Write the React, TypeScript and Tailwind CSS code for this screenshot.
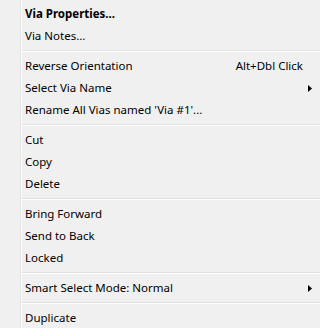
type Item =
  | { kind: "sep" }
  | { kind: "item"; label: string; bold?: boolean; shortcut?: string; submenu?: boolean };

const items: Item[] = [
  { kind: "item", label: "Via Properties...", bold: true },
  { kind: "item", label: "Via Notes..." },
  { kind: "sep" },
  { kind: "item", label: "Reverse Orientation", shortcut: "Alt+Dbl Click" },
  { kind: "item", label: "Select Via Name", submenu: true },
  { kind: "item", label: "Rename All Vias named 'Via #1'..." },
  { kind: "sep" },
  { kind: "item", label: "Cut" },
  { kind: "item", label: "Copy" },
  { kind: "item", label: "Delete" },
  { kind: "sep" },
  { kind: "item", label: "Bring Forward" },
  { kind: "item", label: "Send to Back" },
  { kind: "item", label: "Locked" },
  { kind: "sep" },
  { kind: "item", label: "Smart Select Mode: Normal", submenu: true },
  { kind: "sep" },
  { kind: "item", label: "Duplicate" },
];

function Arrow() {
  return (
    <svg width="4" height="7" viewBox="0 0 4 7" className="block">
      <path d="M0 0 L4 3.5 L0 7 Z" fill="#000" />
    </svg>
  );
}

export default function App() {
  return (
    <div
      className="relative h-[328px] w-[320px] overflow-hidden bg-[#f0f0f0] pt-[3px] text-[11.5px] text-black"
      style={{ fontFamily: '"Noto Sans", "Open Sans", sans-serif' }}
    >
      {/* gutter line */}
      <div className="absolute top-0 bottom-0 left-[20px] w-[2px] border-l border-[#e2e3e3] bg-white" />

      <div className="relative flex flex-col">
        {items.map((it, i) =>
          it.kind === "sep" ? (
            <div key={i} className="h-[8px] pt-[3px] pl-[22px]">
              <div className="h-px bg-[#e0e0e0]" />
              <div className="h-px bg-white" />
            </div>
          ) : (
            <div key={i} className="flex h-[22px] items-center pl-[25px] pr-[8px] leading-[22px]">
              <span className={it.bold ? "font-bold" : ""}>{it.label}</span>
              {it.shortcut && <span className="ml-auto mr-[9px]">{it.shortcut}</span>}
              {it.submenu && (
                <span className="ml-auto">
                  <Arrow />
                </span>
              )}
            </div>
          )
        )}
      </div>
    </div>
  );
}
